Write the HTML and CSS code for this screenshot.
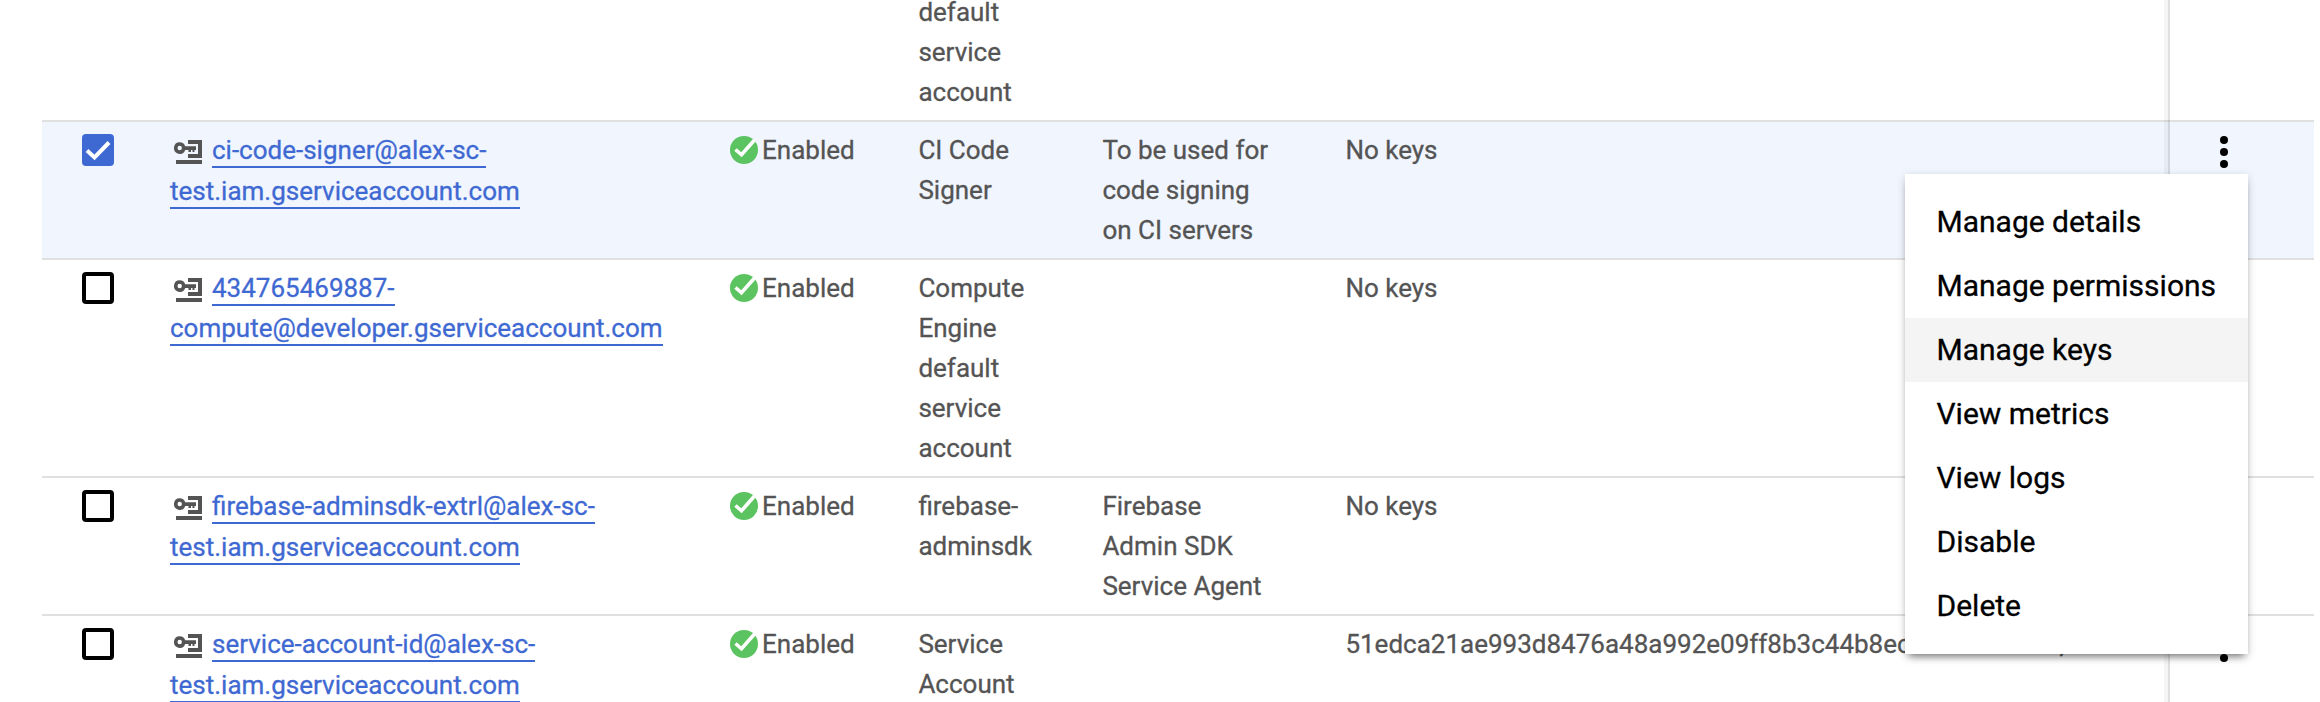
FILE: index.html
```html
<!DOCTYPE html>
<html lang="en">
<head>
<meta charset="utf-8">
<title>Service accounts</title>
<link rel="stylesheet" href="styles.css">
</head>
<body>
<svg class="defs" aria-hidden="true">
  <symbol id="account" viewBox="0 0 28 24">
    <path fill-rule="evenodd" d="M5.700 2.200A5.800 5.800 0 0 1 11.200 6.200H22V10H20.500V12H18.500V10H17V12H14.500V10H11.200A5.800 5.800 0 1 1 5.700 2.200ZM5.700 5.800A2.200 2.200 0 1 0 5.700 10.200A2.200 2.200 0 0 0 5.700 5.800Z"/>
    <path d="M14 0H28V18H14V14H24V4H14ZM2 20H28V24H2Z"/>
  </symbol>
  <symbol id="ok" viewBox="0 0 28 28">
    <circle cx="14" cy="14" r="14" fill="#5bc35f"/>
    <path d="M5.500 13.500L11.500 18.800L24.500 4" fill="none" stroke="#fff" stroke-width="3.600"/>
  </symbol>
  <symbol id="more" viewBox="0 0 8 32">
    <circle cx="4" cy="4" r="4"/><circle cx="4" cy="16" r="4"/><circle cx="4" cy="28" r="4"/>
  </symbol>
</svg>
<main class="table">
  <div class="row row-first">
    <div></div><div></div><div></div>
    <div>default<br>service<br>account</div>
    <div></div><div></div><div></div><div class="actions"></div>
  </div>
  <div class="row selected">
    <div class="select"><span class="box checked"><svg viewBox="0 0 32 32"><path d="M5 16.500L12.500 23.500L27 8.500" fill="none" stroke="#fff" stroke-width="4"/></svg></span></div>
    <div class="email"><div class="first"><svg class="account"><use href="#account"/></svg><a>ci-code-signer@alex-sc-</a></div><a>test.iam.gserviceaccount.com</a></div>
    <div class="status"><svg><use href="#ok"/></svg>Enabled</div>
    <div>CI Code<br>Signer</div>
    <div>To be used for<br>code signing<br>on CI servers</div>
    <div>No keys</div><div></div>
    <div class="actions"><svg><use href="#more"/></svg></div>
  </div>
  <div class="row">
    <div class="select"><span class="box"></span></div>
    <div class="email compact"><div class="first"><svg class="account"><use href="#account"/></svg><a>434765469887-</a></div><a>compute@developer.gserviceaccount.com</a></div>
    <div class="status"><svg><use href="#ok"/></svg>Enabled</div>
    <div>Compute<br>Engine<br>default<br>service<br>account</div>
    <div></div>
    <div>No keys</div><div></div>
    <div class="actions"><svg><use href="#more"/></svg></div>
  </div>
  <div class="row">
    <div class="select"><span class="box"></span></div>
    <div class="email"><div class="first"><svg class="account"><use href="#account"/></svg><a>firebase-adminsdk-extrl@alex-sc-</a></div><a>test.iam.gserviceaccount.com</a></div>
    <div class="status"><svg><use href="#ok"/></svg>Enabled</div>
    <div>firebase-<br>adminsdk</div>
    <div>Firebase<br>Admin SDK<br>Service Agent</div>
    <div>No keys</div><div></div>
    <div class="actions"><svg><use href="#more"/></svg></div>
  </div>
  <div class="row row-last">
    <div class="select"><span class="box"></span></div>
    <div class="email"><div class="first"><svg class="account"><use href="#account"/></svg><a>service-account-id@alex-sc-</a></div><a>test.iam.gserviceaccount.com</a></div>
    <div class="status"><svg><use href="#ok"/></svg>Enabled</div>
    <div>Service<br>Account</div>
    <div></div>
    <div>51edca21ae993d8476a48a992e09ff8b3c44b8ec</div><div>,</div>
    <div class="actions"><svg><use href="#more"/></svg></div>
  </div>
</main>
<div class="menu" role="menu">
  <div class="item">Manage details</div>
  <div class="item">Manage permissions</div>
  <div class="item active">Manage keys</div>
  <div class="item">View metrics</div>
  <div class="item">View logs</div>
  <div class="item">Disable</div>
  <div class="item">Delete</div>
</div>
</body>
</html>
```

FILE: styles.css
```css
* { box-sizing: border-box; }
html, body { height: 702px; overflow: hidden; }
body {
  margin: 0;
  position: relative;
  background: #fff;
  font: 26px/40px Roboto, sans-serif;
  color: #545454;
  -webkit-text-stroke: .3px;
}
.defs { position: absolute; width: 0; height: 0; }
.table { width: 2272px; margin-left: 42px; }
.row {
  display: grid;
  grid-template-columns: 128px 560px 188.4px 184px 243px 714px 104.6px 150px;
  border-top: 2px solid #e0e0e0;
}
.row > div { padding: 8px 0; white-space: nowrap; }
.row-first { border-top: 0; margin-top: -16px; }
.selected { background: #f0f5fe; }
.row > .select { padding: 12px 0 0 40px; }
.box {
  display: block;
  width: 32px;
  height: 32px;
  border: 4px solid #000;
  border-radius: 4px;
}
.checked { border: 0; background: #3f69d2; }
.checked svg { display: block; width: 32px; height: 32px; }
.first { display: flex; height: 41px; }
.compact .first { height: 40px; }
.account { width: 28px; height: 24px; margin: 10px 10px 0 4px; fill: #545454; }
.email a {
  display: block;
  width: max-content;
  height: 38px;
  color: #3f69d2;
  border-bottom: 2px solid #3f69d2;
}
.status { display: flex; }
.status svg { width: 28px; height: 28px; margin: 6px 4px 0 0; }
.row > .actions {
  margin-top: -2px;
  padding: 16px 0 0 50px;
  border-left: 4px solid rgba(0, 0, 0, .04);
  box-shadow: inset 2px 0 rgba(0, 0, 0, .12);
}
.actions svg { display: block; width: 8px; height: 32px; margin-left: 2px; }
.row-last { height: 88px; overflow: hidden; }
.row > .email, .row > .status { min-width: 0; }
.row.row-last > .actions { margin-top: 0; padding-top: 14px; }
.menu {
  position: absolute;
  left: 1905px;
  top: 174px;
  width: 343px;
  padding: 16px 0;
  background: #fff;
  box-shadow: 0 6px 8px -4px rgba(0, 0, 0, .5), 0 2px 8px rgba(0, 0, 0, .15);
  color: #000;
  font-size: 30px;
}
.item { height: 64px; padding-left: 31.500px; line-height: 64px; }
.active { background: #f4f4f4; }
```
